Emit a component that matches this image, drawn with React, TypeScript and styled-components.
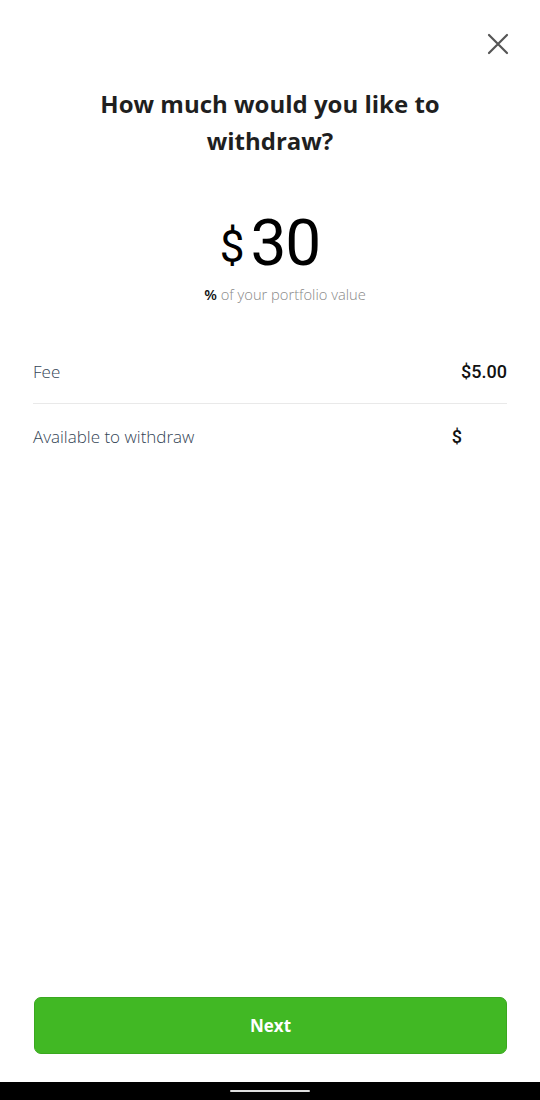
import * as React from 'react';
import styled, { createGlobalStyle } from 'styled-components';

const Global = createGlobalStyle`
  html, body {
    margin: 0;
    padding: 0;
    background: #fff;
  }
  * { box-sizing: border-box; }
`;

const Screen = styled.div`
  width: 540px;
  height: 1100px;
  display: flex;
  flex-direction: column;
  background: #fff;
  font-family: "Open Sans", "Liberation Sans", sans-serif;
`;

const TopBar = styled.div`
  display: flex;
  justify-content: flex-end;
  padding: 32px 30px 0 0;
  height: 76px;
`;

const CloseButton = styled.button`
  width: 24px;
  height: 24px;
  padding: 0;
  border: none;
  background: none;
  display: flex;
  align-items: center;
  justify-content: center;
`;

const Title = styled.h1`
  margin: 9px 0 0;
  padding: 0 50px;
  text-align: center;
  font-size: 24px;
  line-height: 37px;
  font-weight: 700;
  color: #1f1f1f;
`;

const AmountBlock = styled.div`
  margin-top: 48px;
  display: flex;
  flex-direction: column;
  align-items: center;
`;

const AmountRow = styled.div`
  display: flex;
  align-items: center;
  font-family: Roboto, "Liberation Sans", sans-serif;
  color: #000;
`;

const Currency = styled.span`
  font-size: 44px;
  line-height: 50px;
  margin: 6px 6px 0 0;
`;

const Amount = styled.span`
  font-size: 64px;
  line-height: 74px;
  letter-spacing: -1px;
`;

const Hint = styled.div`
  margin-top: 3px;
  padding-left: 30px;
  font-size: 14.7px;
  font-weight: 300;
  color: #888;
  b {
    font-weight: 600;
    color: #111;
  }
`;

const Details = styled.div`
  margin: 36px 33px 0;
`;

const Row = styled.div<{ $divider?: boolean }>`
  display: flex;
  justify-content: space-between;
  align-items: center;
  height: 64px;
  border-bottom: ${(p) => (p.$divider ? '1px solid #e9e9e9' : 'none')};
`;

const Label = styled.span`
  font-size: 17px;
  font-weight: 300;
  color: #334455;
`;

const Value = styled.span<{ $pad?: number }>`
  font-family: Roboto, "Liberation Sans", sans-serif;
  font-size: 18px;
  font-weight: 500;
  color: #111;
  padding-right: ${(p) => p.$pad ?? 0}px;
`;

const Spacer = styled.div`
  flex: 1;
`;

const Footer = styled.div`
  padding: 0 33px 28px 34px;
`;

const NextButton = styled.button`
  width: 100%;
  height: 57px;
  border: 1px solid #3aa820;
  border-radius: 7px;
  background: #41b824;
  color: #fff;
  font-family: "Open Sans", "Liberation Sans", sans-serif;
  font-size: 17px;
  font-weight: 700;
`;

const NavBar = styled.div`
  height: 18px;
  background: #000;
  display: flex;
  justify-content: center;
  align-items: center;
`;

const Handle = styled.div`
  width: 80px;
  height: 2px;
  border-radius: 1px;
  background: #ddd;
`;

export default function App() {
  return (
    <>
      <Global />
      <Screen>
        <TopBar>
          <CloseButton aria-label="Close">
            <svg width="22" height="22" viewBox="0 0 22 22">
              <path d="M2 2 L20 20 M20 2 L2 20" stroke="#555" strokeWidth="2.2" strokeLinecap="round" />
            </svg>
          </CloseButton>
        </TopBar>
        <Title>How much would you like to withdraw?</Title>
        <AmountBlock>
          <AmountRow>
            <Currency>$</Currency>
            <Amount>30</Amount>
          </AmountRow>
          <Hint>
            <b>%</b> of your portfolio value
          </Hint>
        </AmountBlock>
        <Details>
          <Row $divider>
            <Label>Fee</Label>
            <Value>$5.00</Value>
          </Row>
          <Row>
            <Label>Available to withdraw</Label>
            <Value $pad={45}>$</Value>
          </Row>
        </Details>
        <Spacer />
        <Footer>
          <NextButton>Next</NextButton>
        </Footer>
        <NavBar>
          <Handle />
        </NavBar>
      </Screen>
    </>
  );
}
